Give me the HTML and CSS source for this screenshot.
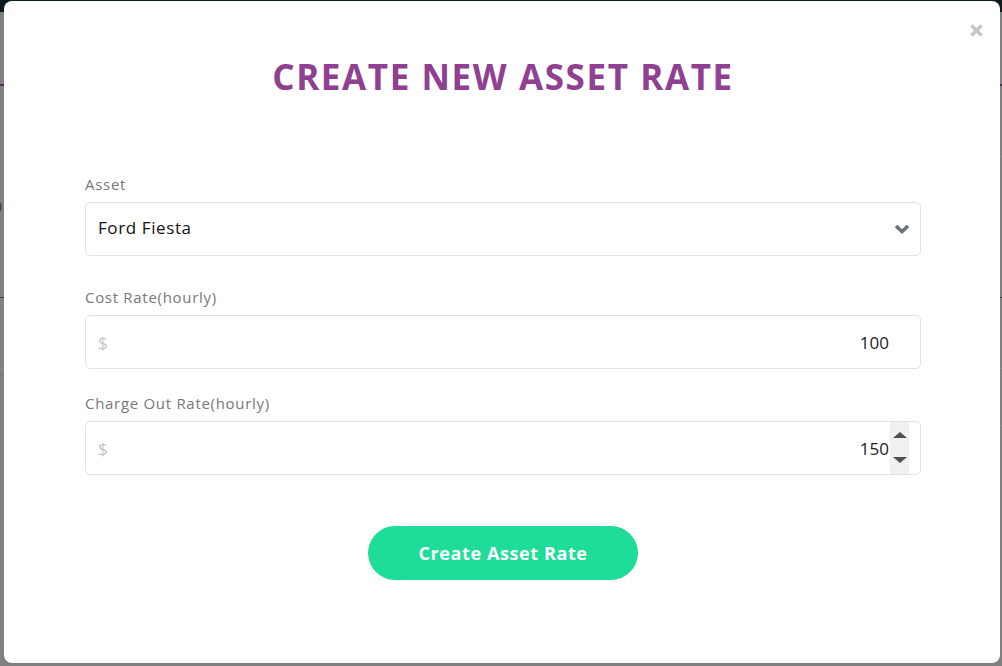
FILE: index.html
```html
<!DOCTYPE html>
<html lang="en">
<head>
    <meta charset="UTF-8">
    <meta name="viewport" content="width=device-width, initial-scale=1.0">
    <title>Create New Asset Rate</title>
    <link rel="stylesheet" href="styles.css">
</head>
<body>
    <!-- page behind the modal, dimmed -->
    <div class="backdrop">
        <div class="topbar"></div>
        <div class="page-rows">
            <div class="row row-accent"></div>
            <div class="row row-line"></div>
            <div class="row row-text">0</div>
            <div class="row row-accent-thin"></div>
            <div class="row row-line row-line-2"></div>
            <div class="row row-line row-line-3"></div>
        </div>
    </div>

    <div class="modal">
        <button type="button" class="close-btn" aria-label="Close">
            <svg width="13" height="13" viewBox="0 0 13 13">
                <path d="M1.5 1.5 L11.5 11.5 M11.5 1.5 L1.5 11.5" stroke="#c6c6c6" stroke-width="3.4" fill="none"/>
            </svg>
        </button>

        <h2 class="modal-title">CREATE NEW ASSET RATE</h2>

        <form id="assetRateForm" class="rate-form">
            <div class="input-group group-asset">
                <label for="asset">Asset</label>
                <div class="field-box">
                    <select id="asset" name="asset">
                        <option>Ford Fiesta</option>
                    </select>
                    <svg class="chevron" width="16" height="10" viewBox="0 0 16 10">
                        <path d="M2 2 L8 7.5 L14 2" stroke="#6c7178" stroke-width="3.6" fill="none"/>
                    </svg>
                </div>
            </div>

            <div class="input-group">
                <label for="costRate">Cost Rate(hourly)</label>
                <div class="field-box">
                    <span class="currency">$</span>
                    <input type="number" id="costRate" name="costRate" value="100">
                    <span class="spinner spinner-hidden"></span>
                </div>
            </div>

            <div class="input-group">
                <label for="chargeRate">Charge Out Rate(hourly)</label>
                <div class="field-box">
                    <span class="currency">$</span>
                    <input type="number" id="chargeRate" name="chargeRate" value="150">
                    <span class="spinner">
                        <svg width="14" height="6" viewBox="0 0 14 6"><path d="M7 0 L14 6 L0 6 Z" fill="#505050"/></svg>
                        <svg width="14" height="6" viewBox="0 0 14 6"><path d="M0 0 L14 0 L7 6 Z" fill="#505050"/></svg>
                    </span>
                </div>
            </div>

            <button type="submit" class="submit-btn">Create Asset Rate</button>
        </form>
    </div>
</body>
</html>
```

FILE: styles.css
```css
* {
    margin: 0;
    padding: 0;
    box-sizing: border-box;
}

body {
    font-family: 'Open Sans', 'Liberation Sans', sans-serif;
    background-color: #808080;
    height: 100vh;
    overflow: hidden;
}

/* dimmed page behind the modal */
.backdrop {
    height: 100%;
}

.topbar {
    height: 12px;
    background-color: #0c1b1d;
}

.page-rows {
    padding-top: 72px;
}

.row {
    height: 1px;
}

.row-accent {
    height: 2px;
    background-color: #5b2a5d;
}

.row-line {
    margin-top: 70px;
    background-color: #8a8a8a;
}

.row-text {
    height: auto;
    margin-top: 40px;
    margin-left: -6px;
    font-size: 14px;
    line-height: 20px;
    color: #2e2e2e;
}

.row-accent-thin {
    margin-top: 80px;
    background-color: #5b2a5d;
}

.row-line-2 {
    margin-top: 70px;
}

.row-line-3 {
    margin-top: 56px;
}

/* modal */
.modal {
    position: fixed;
    top: 1px;
    left: 4px;
    width: 996px;
    height: 662px;
    background-color: #ffffff;
    border-radius: 8px;
    padding: 50px 79px 0 81px;
}

.close-btn {
    position: absolute;
    top: 23px;
    right: 17px;
    width: 13px;
    height: 13px;
    border: none;
    background: none;
    display: flex;
    cursor: pointer;
}

.modal-title {
    text-align: center;
    font-size: 35px;
    line-height: 52px;
    font-weight: 700;
    letter-spacing: 1.6px;
    color: #8f4091;
    margin-bottom: 71px;
}

.input-group {
    margin-bottom: 25px;
}

.group-asset {
    margin-bottom: 32px;
}

.input-group label {
    display: block;
    font-size: 15px;
    line-height: 20px;
    letter-spacing: 0.7px;
    color: #787878;
    margin-bottom: 8px;
}

.input-group + .input-group label {
    margin-top: -1px;
}

.field-box {
    display: flex;
    align-items: center;
    height: 54px;
    border: 1px solid #e2e2e2;
    border-radius: 5px;
    padding: 0 11px 0 12px;
}

.field-box select {
    flex: 1;
    appearance: none;
    -webkit-appearance: none;
    border: none;
    outline: none;
    background: none;
    font-family: inherit;
    font-size: 17px;
    letter-spacing: 0.6px;
    color: #111;
    margin-top: -3px;
}

.chevron {
    margin-right: -1px;
}

.currency {
    font-size: 17px;
    color: #c4c4c4;
}

.field-box input {
    flex: 1;
    min-width: 0;
    border: none;
    outline: none;
    text-align: right;
    font-family: inherit;
    font-size: 17px;
    color: #222;
    -moz-appearance: textfield;
}

.field-box input::-webkit-inner-spin-button,
.field-box input::-webkit-outer-spin-button {
    -webkit-appearance: none;
    margin: 0;
}

.spinner {
    width: 19px;
    align-self: stretch;
    margin: 0 0 0 1px;
    background-color: #f0f0f0;
    display: flex;
    flex-direction: column;
    justify-content: space-between;
    align-items: center;
    padding: 10px 0 11px;
}

.spinner-hidden {
    visibility: hidden;
}

.submit-btn {
    display: block;
    margin: 51px auto 0;
    width: 270px;
    height: 54px;
    border: none;
    border-radius: 27px;
    background-color: #1ddd98;
    color: #ffffff;
    font-family: inherit;
    font-size: 18px;
    font-weight: 700;
    letter-spacing: 0.6px;
    cursor: pointer;
}
```
